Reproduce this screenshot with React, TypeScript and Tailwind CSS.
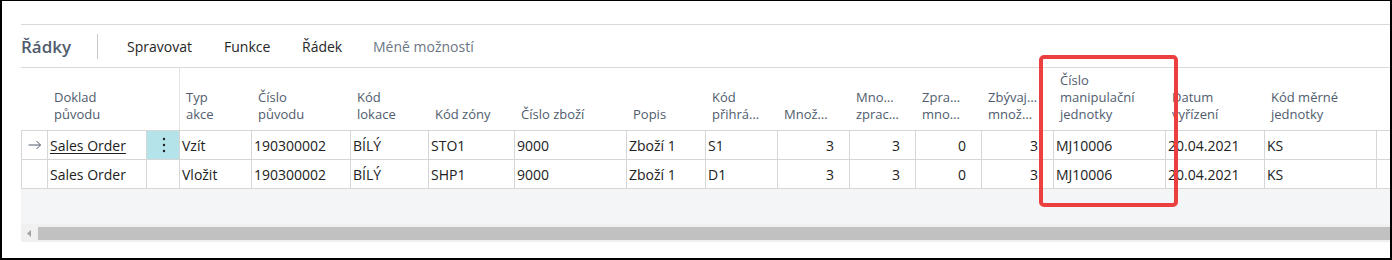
import React from "react";

const FONT = { fontFamily: '"Open Sans", "Noto Sans", sans-serif' };

type Col = { w: string; head: string[]; num?: boolean };

const cols: Col[] = [
  { w: "w-[99px]", head: ["Doklad", "původu"] },
  { w: "w-[33px]", head: [] },
  { w: "w-[72px]", head: ["Typ", "akce"] },
  { w: "w-[99px]", head: ["Číslo", "původu"] },
  { w: "w-[78px]", head: ["Kód", "lokace"] },
  { w: "w-[86px]", head: ["Kód zóny"] },
  { w: "w-[112px]", head: ["Číslo zboží"] },
  { w: "w-[79px]", head: ["Popis"] },
  { w: "w-[72px]", head: ["Kód", "přihrá…"] },
  { w: "w-[72px]", head: ["Množ…"], num: true },
  { w: "w-[66px]", head: ["Mno…", "zprac…"], num: true },
  { w: "w-[66px]", head: ["Zpra…", "mno…"], num: true },
  { w: "w-[72px]", head: ["Zbývaj…", "množ…"], num: true },
  { w: "w-[112px]", head: ["Číslo", "manipulační", "jednotky"] },
  { w: "w-[99px]", head: ["Datum", "vyřízení"] },
  { w: "w-[112px]", head: ["Kód měrné", "jednotky"] },
];

const rows = [
  ["Sales Order", "", "Vzít", "190300002", "BÍLÝ", "STO1", "9000", "Zboží 1", "S1", "3", "3", "0", "3", "MJ10006", "20.04.2021", "KS"],
  ["Sales Order", "", "Vložit", "190300002", "BÍLÝ", "SHP1", "9000", "Zboží 1", "D1", "3", "3", "0", "3", "MJ10006", "20.04.2021", "KS"],
];

function Arrow() {
  return (
    <svg width="14" height="10" viewBox="0 0 14 10" fill="none">
      <path d="M0.5 5H12.5M8.5 1L12.5 5L8.5 9" stroke="#505c6d" strokeWidth="1" />
    </svg>
  );
}

function Dots() {
  return (
    <svg width="4" height="16" viewBox="0 0 4 16">
      <circle cx="2" cy="2" r="1.2" fill="#212121" />
      <circle cx="2" cy="8" r="1.2" fill="#212121" />
      <circle cx="2" cy="14" r="1.2" fill="#212121" />
    </svg>
  );
}

export default function App() {
  return (
    <div
      className="relative w-[1392px] h-[260px] bg-white border-black border-t border-l-2 border-r-2 border-b-2 overflow-hidden"
      style={FONT}
    >
      <div className="pl-[19px] pt-[23px]">
        <div className="border-t border-[#d9d9d9]" />
        {/* action bar */}
        <div className="h-[42px] flex items-center border-b border-[#d9d9d9] box-content">
          <div className="text-[17px] font-semibold text-[#505c6d] leading-none w-[76px]">Řádky</div>
          <div className="w-px h-[25px] bg-[#c8c8c8]" />
          <div className="w-[29px]" />
          <div className="w-[97px] text-[14px] text-[#262626]">Spravovat</div>
          <div className="w-[78px] text-[14px] text-[#262626]">Funkce</div>
          <div className="w-[71px] text-[14px] text-[#262626]">Řádek</div>
          <div className="text-[14px] text-[#6b7684]">Méně možností</div>
        </div>
        {/* header */}
        <div className="flex h-[62px] text-[13px] leading-[17px] text-[#505c6d]">
          <div className="w-[27px]" />
          {cols.map((c, i) => (
            <div
              key={i}
              className={`${c.w} shrink-0 flex flex-col justify-end pb-[7px] pl-[6px] ${i === 1 ? "border-r border-[#e3e3e3]" : ""}`}
            >
              {c.head.map((h, j) => (
                <div key={j} className="whitespace-nowrap">{h}</div>
              ))}
            </div>
          ))}
        </div>
        {/* rows */}
        <div className="border-t border-[#d6d6d6] text-[14px] text-[#212121]">
          {rows.map((r, ri) => (
            <div key={ri} className="flex h-[29px] border-b border-[#d6d6d6]">
              <div className="w-[27px] shrink-0 border-l border-r border-[#d6d6d6] flex items-center justify-center">
                {ri === 0 ? <Arrow /> : null}
              </div>
              {cols.map((c, i) => (
                <div
                  key={i}
                  className={`${c.w} shrink-0 border-r border-[#d6d6d6] flex items-center whitespace-nowrap ${
                    c.num ? "justify-end pr-[15px]" : "pl-[2px]"
                  } ${i === 1 && ri === 0 ? "bg-[#b4e4ea] justify-center pl-0" : ""}`}
                >
                  {i === 1 ? (
                    ri === 0 ? <Dots /> : null
                  ) : i === 0 && ri === 0 ? (
                    <span className="underline underline-offset-2">{r[i]}</span>
                  ) : (
                    r[i]
                  )}
                </div>
              ))}
              <div className="flex-1" />
            </div>
          ))}
        </div>
        {/* empty area */}
        <div className="h-[35px] bg-[#f4f5f7]" />
        {/* scrollbar */}
        <div className="h-[18px] bg-[#f0f0f0] flex items-center">
          <div className="w-[17px] flex items-center justify-center">
            <svg width="5" height="7" viewBox="0 0 5 7">
              <path d="M4 0L0 3.5L4 7Z" fill="#a3a3a3" />
            </svg>
          </div>
          <div className="flex-1 h-[13px] bg-[#c1c1c1]" />
        </div>
      </div>
      {/* red annotation box */}
      <div className="absolute left-[1037px] top-[54px] w-[139px] h-[152px] border-4 border-[#ec3f3f] rounded-[5px]" />
    </div>
  );
}
